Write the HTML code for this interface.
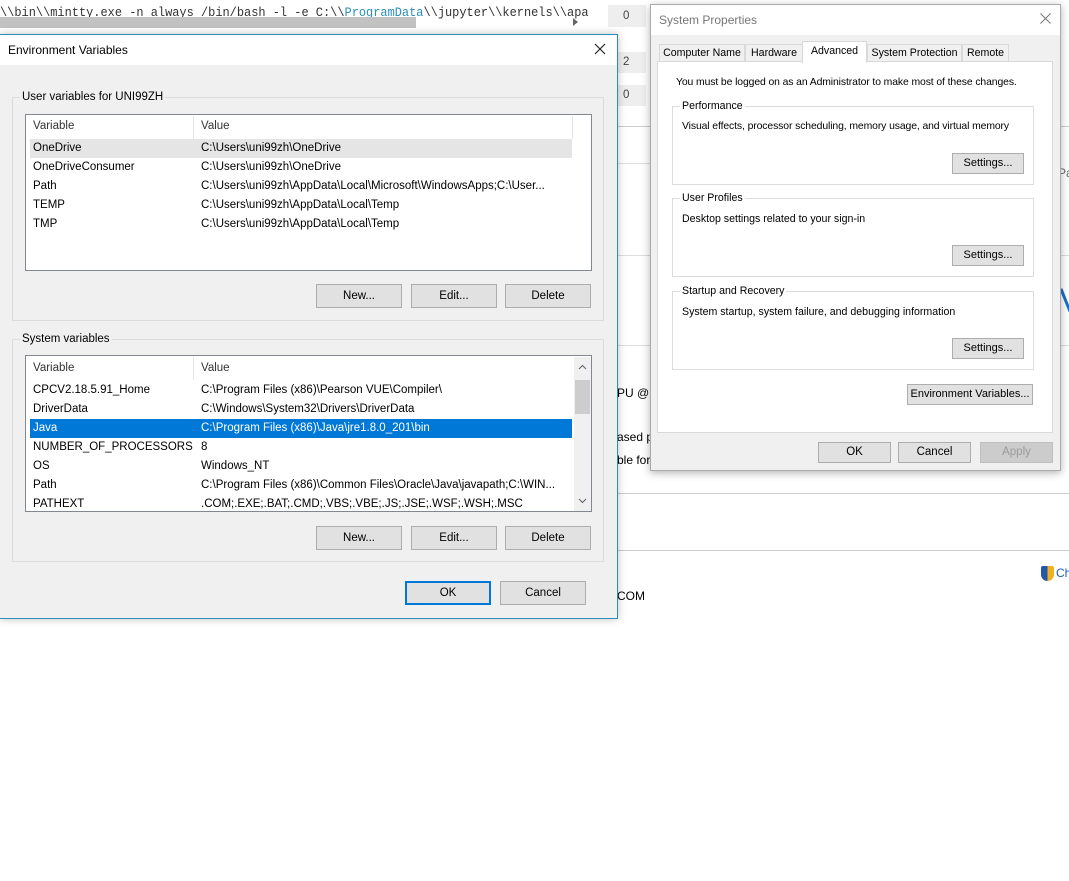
<!DOCTYPE html>
<html><head><meta charset="utf-8"><style>
*{margin:0;padding:0;box-sizing:border-box}
body{width:1069px;height:881px;background:#fff;position:relative;overflow:hidden;font-family:"Liberation Sans",sans-serif;font-size:11.5px;color:#000}
.a{position:absolute;white-space:nowrap}
.btn{position:absolute;background:#e1e1e1;border:1px solid #adadad;text-align:center;line-height:22px;font-size:11.5px}
.grp{position:absolute;border:1px solid #dcdcdc}
.lbl{position:absolute;top:-8px;left:7px;background:#f0f0f0;padding:0 2px;line-height:14px}
.list{position:absolute;background:#fff;border:1px solid #828790}
.row{position:absolute;left:4px;height:19px;line-height:19px;width:542px}
.row span{position:absolute;left:3px}
.row span+span{left:171px}
.sp{font-size:10.6px}
</style></head><body>
<div class="a" style="left:0;top:5px;font-family:'Liberation Mono',monospace;font-size:13px;color:#333;transform:scaleX(0.92);transform-origin:left">\\bin\\mintty.exe -n always /bin/bash -l -e C:\\<span style="color:#2a8db8">ProgramData</span>\\jupyter\\kernels\\apa</div>
<div class="a" style="left:0;top:17px;width:416px;height:11px;background:#c2c2c2"></div>
<div class="a" style="left:573px;top:18px;width:0;height:0;border-left:5px solid #666;border-top:4px solid transparent;border-bottom:4px solid transparent"></div>
<div class="a" style="left:608px;top:5px;width:38px;height:22px;background:#eee;line-height:22px;padding-left:15px;color:#444">0</div>
<div class="a" style="left:608px;top:52px;width:38px;height:21px;background:#eee;line-height:21px;padding-left:15px;color:#444">2</div>
<div class="a" style="left:608px;top:85px;width:38px;height:21px;background:#eee;line-height:21px;padding-left:15px;color:#444">0</div>
<div class="a" style="left:617px;top:126px;width:34px;height:1px;background:#ccc"></div>
<div class="a" style="left:617px;top:163px;width:34px;height:1px;background:#ddd"></div>
<div class="a" style="left:617px;top:255px;width:34px;height:1px;background:#ddd"></div>
<div class="a" style="left:617px;top:345px;width:34px;height:1px;background:#ddd"></div>
<div class="a" style="left:1060px;top:126px;width:9px;height:1px;background:#ccc"></div>
<div class="a" style="left:1060px;top:255px;width:9px;height:1px;background:#ddd"></div>
<div class="a" style="left:1060px;top:345px;width:9px;height:1px;background:#ddd"></div>
<div class="a" style="left:1058px;top:166px;font-size:12px;color:#666">Pa</div>
<div class="a" style="left:1059px;top:282px;font-size:34px;color:#1a6fc0">V</div>
<div class="a" style="left:617px;top:386px;font-size:12px">PU @ 2</div>
<div class="a" style="left:617px;top:430px;font-size:12px">ased p</div>
<div class="a" style="left:617px;top:453px;font-size:12px">ble for</div>
<div class="a" style="left:617px;top:493px;width:452px;height:1px;background:#ccc"></div>
<div class="a" style="left:617px;top:550px;width:452px;height:1px;background:#ccc"></div>
<div class="a" style="left:617px;top:589px;font-size:12px">COM</div>
<div class="a" style="left:1041px;top:566px;width:13px;height:15px;background:linear-gradient(90deg,#2457a8 50%,#f0b020 50%);border-radius:2px 2px 7px 7px"></div>
<div class="a" style="left:1056px;top:566px;font-size:12px;color:#1a5fb4">Ch</div>

<div class="a" style="left:0;top:34px;width:618px;height:585px;background:#f0f0f0;border:1px solid #2a8fb5;border-left:none;box-shadow:0 0 8px rgba(0,0,0,.25)">
 <div class="a" style="left:0;top:0;width:617px;height:30px;background:#fff"></div>
 <div class="a" style="left:8px;top:8px;font-size:12px">Environment Variables</div>
 <svg class="a" style="left:594px;top:8px" width="12" height="12"><path d="M1 1L11 11M11 1L1 11" stroke="#222" stroke-width="1.2"/></svg>
 <div class="grp" style="left:12px;top:62px;width:592px;height:224px"><div class="lbl">User variables for UNI99ZH</div>
  <div class="list" style="left:12px;top:16px;width:567px;height:157px">
   <div class="a" style="left:167px;top:1px;width:1px;height:23px;background:#e5e5e5"></div>
   <div class="a" style="left:546px;top:1px;width:1px;height:23px;background:#e5e5e5"></div>
   <div class="row" style="top:2px;color:#333"><span>Variable</span><span>Value</span></div>
   <div class="row" style="top:24px;background:#e5e5e5;height:19px"><span>OneDrive</span><span>C:\Users\uni99zh\OneDrive</span></div>
   <div class="row" style="top:43px"><span>OneDriveConsumer</span><span>C:\Users\uni99zh\OneDrive</span></div>
   <div class="row" style="top:62px"><span>Path</span><span>C:\Users\uni99zh\AppData\Local\Microsoft\WindowsApps;C:\User...</span></div>
   <div class="row" style="top:81px"><span>TEMP</span><span>C:\Users\uni99zh\AppData\Local\Temp</span></div>
   <div class="row" style="top:100px"><span>TMP</span><span>C:\Users\uni99zh\AppData\Local\Temp</span></div>
  </div>
  <div class="btn" style="left:303px;top:186px;width:86px;height:24px">New...</div>
  <div class="btn" style="left:398px;top:186px;width:86px;height:24px">Edit...</div>
  <div class="btn" style="left:492px;top:186px;width:86px;height:24px">Delete</div>
 </div>
 <div class="grp" style="left:12px;top:304px;width:592px;height:223px"><div class="lbl">System variables</div>
  <div class="list" style="left:12px;top:15px;width:567px;height:157px;overflow:hidden">
   <div class="a" style="left:167px;top:1px;width:1px;height:23px;background:#e5e5e5"></div>
   <div class="row" style="top:3px;color:#333"><span>Variable</span><span>Value</span></div>
   <div class="row" style="top:25px"><span>CPCV2.18.5.91_Home</span><span>C:\Program Files (x86)\Pearson VUE\Compiler\</span></div>
   <div class="row" style="top:44px"><span>DriverData</span><span>C:\Windows\System32\Drivers\DriverData</span></div>
   <div class="row" style="top:63px;background:#0078d7;color:#fff"><span>Java</span><span>C:\Program Files (x86)\Java\jre1.8.0_201\bin</span></div>
   <div class="row" style="top:82px"><span>NUMBER_OF_PROCESSORS</span><span>8</span></div>
   <div class="row" style="top:101px"><span>OS</span><span>Windows_NT</span></div>
   <div class="row" style="top:120px"><span>Path</span><span>C:\Program Files (x86)\Common Files\Oracle\Java\javapath;C:\WIN...</span></div>
   <div class="row" style="top:139px"><span>PATHEXT</span><span>.COM;.EXE;.BAT;.CMD;.VBS;.VBE;.JS;.JSE;.WSF;.WSH;.MSC</span></div>
   <div class="a" style="left:548px;top:1px;width:17px;height:154px;background:#f0f0f0"></div>
   <div class="a" style="left:549px;top:24px;width:15px;height:34px;background:#cdcdcd"></div>
   <svg class="a" style="left:552px;top:8px" width="9" height="6"><path d="M1 5L4.5 1.5L8 5" stroke="#606060" fill="none"/></svg>
   <svg class="a" style="left:552px;top:142px" width="9" height="6"><path d="M1 1L4.5 4.5L8 1" stroke="#606060" fill="none"/></svg>
  </div>
  <div class="btn" style="left:303px;top:186px;width:86px;height:24px">New...</div>
  <div class="btn" style="left:398px;top:186px;width:86px;height:24px">Edit...</div>
  <div class="btn" style="left:492px;top:186px;width:86px;height:24px">Delete</div>
 </div>
 <div class="btn" style="left:405px;top:546px;width:86px;height:24px;border:2px solid #0078d7;line-height:20px">OK</div>
 <div class="btn" style="left:500px;top:546px;width:86px;height:24px">Cancel</div>
</div>

<div class="a sp" style="left:650px;top:4px;width:411px;height:467px;background:#f0f0f0;border:1px solid #aaa;box-shadow:0 2px 8px rgba(0,0,0,.3)">
 <div class="a" style="left:0;top:0;width:409px;height:30px;background:#fff"></div>
 <div class="a" style="left:8px;top:8px;font-size:12px;color:#777">System Properties</div>
 <svg class="a" style="left:389px;top:8px" width="11" height="11"><path d="M0.5 0.5L10.5 10.5M10.5 0.5L0.5 10.5" stroke="#777" stroke-width="1"/></svg>
 <div class="a" style="left:6px;top:56px;width:396px;height:372px;background:#fff;border:1px solid #d9d9d9"></div>
 <div class="a" style="left:8px;top:39px;width:86px;height:18px;border:1px solid #d9d9d9;background:#f0f0f0;text-align:center;line-height:17px">Computer Name</div>
 <div class="a" style="left:94px;top:39px;width:58px;height:18px;border:1px solid #d9d9d9;background:#f0f0f0;text-align:center;line-height:17px">Hardware</div>
 <div class="a" style="left:151px;top:36px;width:65px;height:22px;border:1px solid #d9d9d9;border-bottom:none;background:#fff;text-align:center;line-height:19px">Advanced</div>
 <div class="a" style="left:216px;top:39px;width:95px;height:18px;border:1px solid #d9d9d9;background:#f0f0f0;text-align:center;line-height:17px">System Protection</div>
 <div class="a" style="left:311px;top:39px;width:47px;height:18px;border:1px solid #d9d9d9;background:#f0f0f0;text-align:center;line-height:17px">Remote</div>
 <div class="a" style="left:25px;top:72px;font-size:10.4px;letter-spacing:-0.1px">You must be logged on as an Administrator to make most of these changes.</div>
 <div class="grp" style="left:21px;top:101px;width:362px;height:79px;background:#fff"><div class="lbl" style="background:#fff">Performance</div>
  <div class="a" style="left:9px;top:14px;font-size:10.4px;letter-spacing:-0.1px">Visual effects, processor scheduling, memory usage, and virtual memory</div>
  <div class="btn" style="left:279px;top:46px;width:72px;height:21px;line-height:19px;font-size:11px">Settings...</div></div>
 <div class="grp" style="left:21px;top:193px;width:362px;height:79px;background:#fff"><div class="lbl" style="background:#fff">User Profiles</div>
  <div class="a" style="left:9px;top:14px;font-size:10.6px">Desktop settings related to your sign-in</div>
  <div class="btn" style="left:279px;top:46px;width:72px;height:21px;line-height:19px;font-size:11px">Settings...</div></div>
 <div class="grp" style="left:21px;top:286px;width:362px;height:79px;background:#fff"><div class="lbl" style="background:#fff">Startup and Recovery</div>
  <div class="a" style="left:9px;top:14px;font-size:10.6px">System startup, system failure, and debugging information</div>
  <div class="btn" style="left:279px;top:46px;width:72px;height:21px;line-height:19px;font-size:11px">Settings...</div></div>
 <div class="btn" style="left:256px;top:379px;width:126px;height:21px;line-height:19px;font-size:11px">Environment Variables...</div>
 <div class="btn" style="left:167px;top:437px;width:73px;height:21px;line-height:19px">OK</div>
 <div class="btn" style="left:247px;top:437px;width:73px;height:21px;line-height:19px">Cancel</div>
 <div class="btn" style="left:329px;top:437px;width:73px;height:21px;line-height:19px;background:#ccc;border-color:#bfbfbf;color:#9a9a9a">Apply</div>
</div>
</body></html>
